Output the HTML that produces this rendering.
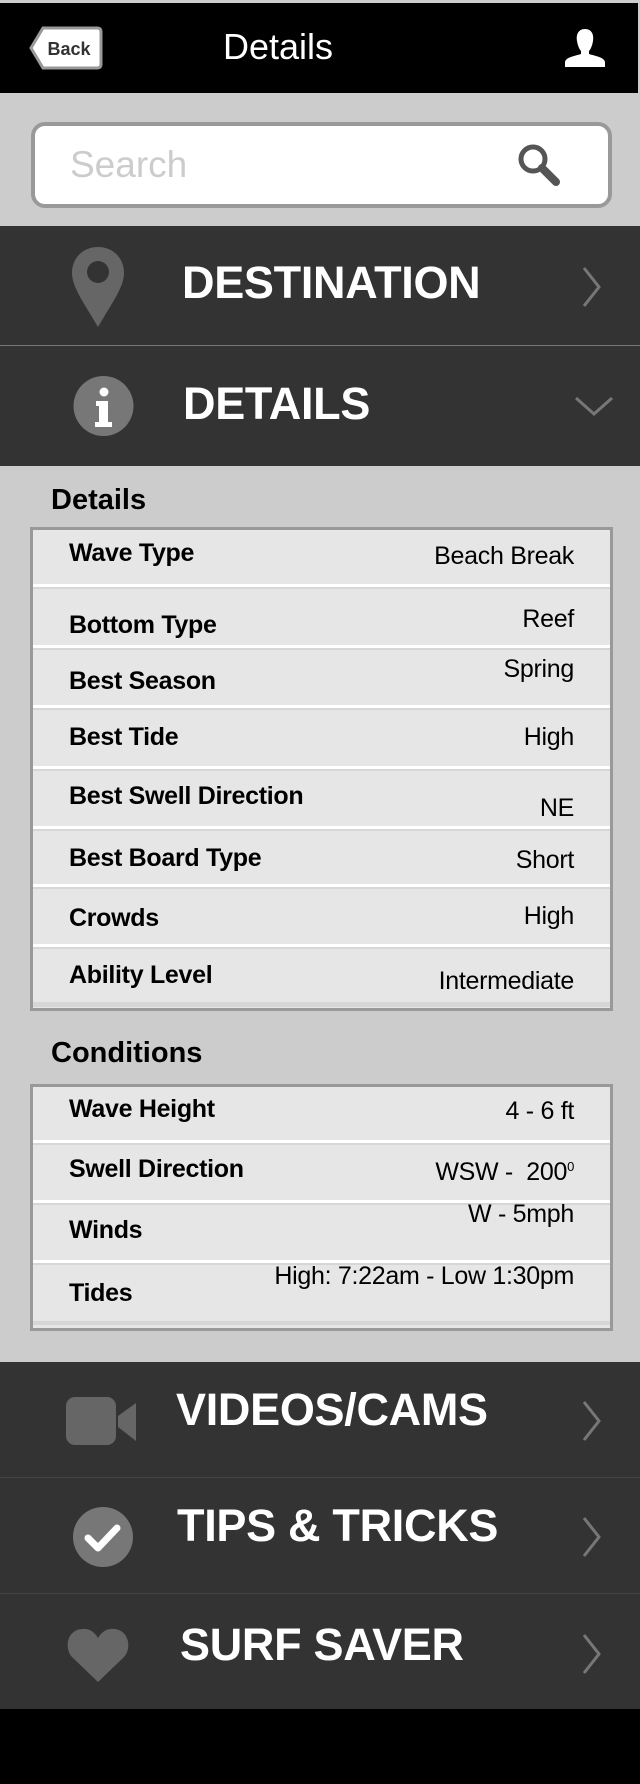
<!DOCTYPE html>
<html><head><meta charset="utf-8"><style>
*{margin:0;padding:0;box-sizing:border-box}
body{width:640px;height:1784px;position:relative;background:#ccc;font-family:"Liberation Sans",Arial,sans-serif;overflow:hidden}
.a{position:absolute}
.band{position:absolute;left:0;width:640px;background:#333}
.bt{position:absolute;color:#fff;font-weight:bold;font-size:45px;height:50px;line-height:50px;letter-spacing:-0.3px}
.lb{position:absolute;left:69px;font-weight:bold;font-size:25px;height:28px;line-height:28px;color:#000;letter-spacing:-0.3px}
.vl{position:absolute;right:66px;font-size:25px;height:28px;line-height:28px;color:#000;text-align:right;white-space:nowrap;letter-spacing:-0.3px}
.sep{position:absolute;left:33px;width:577px;height:5px;background:#fff;border-bottom:2px solid #d6d6d6}
.tbl{position:absolute;left:30px;width:583px;background:#e6e6e6;border:3px solid #999}
.h{position:absolute;left:51px;font-weight:bold;font-size:29px;height:34px;line-height:34px}
</style></head><body>
<div class="a" style="left:0;top:0;width:640px;height:3px;background:#ccc"></div>
<div class="a" style="left:0;top:3px;width:638px;height:90px;background:#000"></div>
<svg class="a" style="left:29px;top:26px" width="74" height="44" viewBox="0 0 74 44"><path d="M14 2 H68 Q72 2 72 6 V38 Q72 42 68 42 H14 L2 22 Z" fill="#fff" stroke="#999" stroke-width="3"/><text x="40" y="29" text-anchor="middle" font-family="Liberation Sans" font-weight="bold" font-size="18" fill="#333">Back</text></svg>
<div class="a" style="left:180px;top:24px;width:196px;text-align:center;color:#fff;font-size:36px;line-height:46px">Details</div>
<svg class="a" style="left:563px;top:28px" width="44" height="40" viewBox="0 0 44 40"><path d="M22 1 C15 1 13 7 14 13 C15 19 17 22 18 23 V26 C12 28 3 29 2 34 V39 H42 V34 C41 29 32 28 26 26 V23 C27 22 29 19 30 13 C31 7 29 1 22 1 Z" fill="#fff"/></svg>
<div class="a" style="left:31px;top:122px;width:581px;height:86px;background:#fff;border:4px solid #999;border-radius:14px"></div>
<div class="a" style="left:70px;top:143px;font-size:37px;line-height:44px;color:#ccc">Search</div>
<svg class="a" style="left:516px;top:142px" width="46" height="46" viewBox="0 0 46 46"><circle cx="17" cy="17" r="12" fill="none" stroke="#555" stroke-width="5"/><path d="M26 26 L40 40" stroke="#555" stroke-width="8" stroke-linecap="round"/></svg>

<div class="band" style="top:226px;height:119px"></div>
<div class="a" style="left:0;top:345px;width:640px;height:1px;background:#777"></div>
<div class="band" style="top:346px;height:120px"></div>
<svg class="a" style="left:70px;top:245px" width="56" height="84" viewBox="0 0 56 84"><path d="M28 2 C13 2 2 13 2 28 C2 42 14 58 28 82 C42 58 54 42 54 28 C54 13 43 2 28 2 Z" fill="#666"/><circle cx="28" cy="27" r="11" fill="#333"/></svg>
<div class="bt" style="left:182px;top:258px">DESTINATION</div>
<svg class="a" style="left:580px;top:266px" width="24" height="42" viewBox="0 0 24 42"><path d="M4 2 L19 21 L4 40" fill="none" stroke="#777" stroke-width="3"/></svg>
<svg class="a" style="left:72px;top:375px" width="63" height="62" viewBox="0 0 63 62"><ellipse cx="31.5" cy="31" rx="30" ry="30" fill="#777"/><circle cx="32" cy="17" r="4.5" fill="#fff"/><path d="M24 26 H36 V47 H40 V52 H23 V47 H27 V31 H24 Z" fill="#fff"/></svg>
<div class="bt" style="left:183px;top:379px">DETAILS</div>
<svg class="a" style="left:574px;top:394px" width="40" height="24" viewBox="0 0 40 24"><path d="M2 4 L20 20 L38 4" fill="none" stroke="#777" stroke-width="3"/></svg>

<div class="h" style="top:483px">Details</div>
<div class="tbl" style="top:527px;height:484px"></div>
<div class="sep" style="top:584px"></div><div class="sep" style="top:645px"></div><div class="sep" style="top:705px"></div><div class="sep" style="top:766px"></div><div class="sep" style="top:826px"></div><div class="sep" style="top:884px"></div><div class="sep" style="top:944px"></div><div class="sep" style="top:1002px;height:5px;background:#d6d6d6;border:none"></div>
<div class="lb" style="top:539px">Wave Type</div><div class="vl" style="top:542px">Beach Break</div>
<div class="lb" style="top:611px">Bottom Type</div><div class="vl" style="top:605px">Reef</div>
<div class="lb" style="top:667px">Best Season</div><div class="vl" style="top:655px">Spring</div>
<div class="lb" style="top:723px">Best Tide</div><div class="vl" style="top:723px">High</div>
<div class="lb" style="top:782px">Best Swell Direction</div><div class="vl" style="top:794px">NE</div>
<div class="lb" style="top:844px">Best Board Type</div><div class="vl" style="top:846px">Short</div>
<div class="lb" style="top:904px">Crowds</div><div class="vl" style="top:902px">High</div>
<div class="lb" style="top:961px">Ability Level</div><div class="vl" style="top:967px">Intermediate</div>

<div class="h" style="top:1036px">Conditions</div>
<div class="tbl" style="top:1084px;height:247px"></div>
<div class="sep" style="top:1140px"></div><div class="sep" style="top:1200px"></div><div class="sep" style="top:1260px"></div><div class="sep" style="top:1321px;height:4px;background:#d6d6d6;border:none"></div>
<div class="lb" style="top:1095px">Wave Height</div><div class="vl" style="top:1097px">4 - 6 ft</div>
<div class="lb" style="top:1155px">Swell Direction</div><div class="vl" style="top:1158px">WSW -&nbsp; 200<sup style="font-size:13px;vertical-align:9px;line-height:0">0</sup></div>
<div class="lb" style="top:1216px">Winds</div><div class="vl" style="top:1200px">W - 5mph</div>
<div class="lb" style="top:1279px">Tides</div><div class="vl" style="top:1262px">High: 7:22am - Low 1:30pm</div>

<div class="band" style="top:1362px;height:115px"></div>
<div class="a" style="left:0;top:1477px;width:640px;height:1px;background:#444"></div>
<div class="band" style="top:1478px;height:115px"></div>
<div class="a" style="left:0;top:1593px;width:640px;height:1px;background:#444"></div>
<div class="band" style="top:1594px;height:115px"></div>
<div class="a" style="left:0;top:1709px;width:640px;height:75px;background:#000"></div>

<svg class="a" style="left:66px;top:1396px" width="72" height="50" viewBox="0 0 72 50"><rect x="0" y="1" width="50" height="48" rx="9" fill="#666"/><path d="M52 20 L70 7 V45 L52 31 Z" fill="#666"/></svg>
<div class="bt" style="left:176px;top:1385px">VIDEOS/CAMS</div>
<svg class="a" style="left:580px;top:1400px" width="24" height="42" viewBox="0 0 24 42"><path d="M4 2 L19 21 L4 40" fill="none" stroke="#777" stroke-width="3"/></svg>

<svg class="a" style="left:72px;top:1506px" width="62" height="62" viewBox="0 0 62 62"><ellipse cx="31" cy="31" rx="30" ry="30" fill="#777"/><path d="M16 32 L26 42 L45 22" fill="none" stroke="#fff" stroke-width="7" stroke-linecap="round" stroke-linejoin="round"/></svg>
<div class="bt" style="left:177px;top:1501px">TIPS &amp; TRICKS</div>
<svg class="a" style="left:580px;top:1516px" width="24" height="42" viewBox="0 0 24 42"><path d="M4 2 L19 21 L4 40" fill="none" stroke="#777" stroke-width="3"/></svg>

<svg class="a" style="left:66px;top:1627px" width="64" height="56" viewBox="0 0 64 56"><path d="M32 55 L6 30 C-2 21 1 3 16 2 C24 1 29 6 32 11 C35 6 40 1 48 2 C63 3 66 21 58 30 Z" fill="#666"/></svg>
<div class="bt" style="left:180px;top:1620px">SURF SAVER</div>
<svg class="a" style="left:580px;top:1633px" width="24" height="42" viewBox="0 0 24 42"><path d="M4 2 L19 21 L4 40" fill="none" stroke="#777" stroke-width="3"/></svg>
</body></html>
